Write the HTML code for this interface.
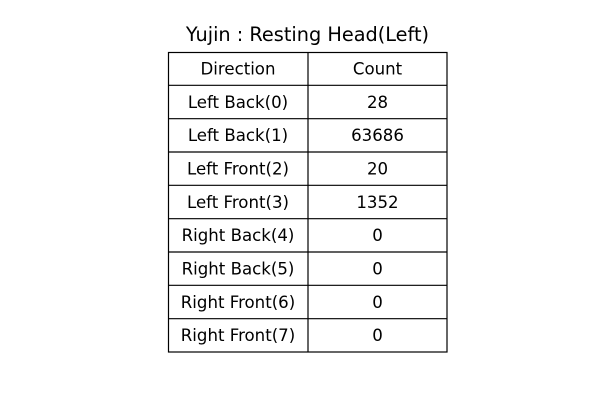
<!DOCTYPE html>
<html><head><meta charset="utf-8"><style>
html,body{margin:0;padding:0;background:#fff;}
body{width:600px;height:400px;position:relative;overflow:hidden;font-family:"DejaVu Sans","Liberation Sans",sans-serif;}
</style></head><body>
<svg width="600" height="400" viewBox="0 0 600 400" xmlns="http://www.w3.org/2000/svg" style="position:absolute;left:0;top:0">
<text x="307.5" y="41" font-size="19.3" text-anchor="middle" font-family="DejaVu Sans, sans-serif" fill="#000">Yujin : Resting Head(Left)</text>
<g stroke="#000" stroke-width="1.2" fill="none">
<rect x="168.5" y="52.5" width="278.5" height="299.5"/>
<line x1="308" y1="52" x2="308" y2="352"/>
<line x1="168" y1="85.3" x2="447" y2="85.3"/>
<line x1="168" y1="118.7" x2="447" y2="118.7"/>
<line x1="168" y1="152" x2="447" y2="152"/>
<line x1="168" y1="185.3" x2="447" y2="185.3"/>
<line x1="168" y1="218.7" x2="447" y2="218.7"/>
<line x1="168" y1="252" x2="447" y2="252"/>
<line x1="168" y1="285.3" x2="447" y2="285.3"/>
<line x1="168" y1="318.7" x2="447" y2="318.7"/>
</g>
<g font-size="16.6" text-anchor="middle" font-family="DejaVu Sans, sans-serif" fill="#000">
<text x="238" y="74.5">Direction</text><text x="377.5" y="74.5">Count</text>
<text x="238" y="107.8">Left Back(0)</text><text x="377.5" y="107.8">28</text>
<text x="238" y="141.2">Left Back(1)</text><text x="377.5" y="141.2">63686</text>
<text x="238" y="174.5">Left Front(2)</text><text x="377.5" y="174.5">20</text>
<text x="238" y="207.8">Left Front(3)</text><text x="377.5" y="207.8">1352</text>
<text x="238" y="241.2">Right Back(4)</text><text x="377.5" y="241.2">0</text>
<text x="238" y="274.5">Right Back(5)</text><text x="377.5" y="274.5">0</text>
<text x="238" y="307.8">Right Front(6)</text><text x="377.5" y="307.8">0</text>
<text x="238" y="341.2">Right Front(7)</text><text x="377.5" y="341.2">0</text>
</g>
</svg>
</body></html>
